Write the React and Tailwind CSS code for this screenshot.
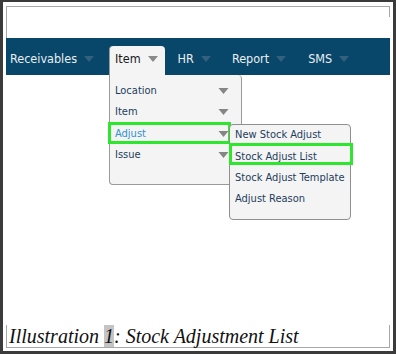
import React from "react"

const Caret = ({ className = "" }) => (
    <svg width="10" height="6" viewBox="0 0 10 6" className={className}>
        <path d="M0 0 L10 0 L5 6 Z" fill="currentColor" />
    </svg>
)

const NavItem = ({ label, className = "" }) => (
    <div className={`flex items-center gap-[7px] pt-[5px] h-[16px] leading-[16px] box-content ${className}`}>
        <span className="text-[#e9eff3]">{label}</span>
        <Caret className="text-[#33617c]" />
    </div>
)

const MenuRow = ({ label, active }) => (
    <div className="flex items-center justify-between h-[21.5px] pl-[5px] pr-[12px]">
        <span className={active ? "text-[#2c92d3]" : "text-[#1d3d5c]"}>{label}</span>
        <Caret className="text-[#858585] w-[11px]" />
    </div>
)

const subItems = ["New Stock Adjust", "Stock Adjust List", "Stock Adjust Template", "Adjust Reason"]

export default function App() {
    return (
        <div className="w-[396px] h-[354px] bg-white border-[#3b3b3b] border-l-[3px] border-r-[3px] border-t-2 border-b-[3px] flex flex-col font-['DejaVu_Sans_Condensed','DejaVu_Sans',sans-serif] [font-stretch:condensed]">
            {/* page corner marks */}
            <div className="h-[36px] px-[3px] pt-[4px] flex">
                <div className="flex-1 border-t border-l border-[#a8a8a8] flex justify-end">
                    <div className="h-[10px] border-r border-[#a8a8a8]" />
                </div>
            </div>

            {/* nav bar */}
            <div className="mx-[3px] h-[37px] bg-[#08466a] flex items-start pt-[8px] text-[12.5px]">
                <NavItem label="Receivables" className="ml-[4px]" />
                <div className="relative ml-[15px] h-[29px] bg-[#f4f4f4] rounded-t-[4px] border-l border-[#9a9a9a] pl-[5px] pr-[7px] pt-[5px]">
                    <div className="flex items-center gap-[7px] h-[16px] leading-[16px]">
                        <span className="text-[#1a1a1a]">Item</span>
                        <Caret className="text-[#8a8a8a]" />
                    </div>

                    {/* dropdown */}
                    <div className="absolute top-full left-[-1px] w-[133px] h-[110px] bg-[#f4f4f4] border-l border-r border-b border-[#9a9a9a] rounded-tr-[4px] rounded-b-[4px] pt-[5px] text-[11px]">
                        <MenuRow label="Location" />
                        <MenuRow label="Item" />
                        <MenuRow label="Adjust" active />
                        <MenuRow label="Issue" />

                        <div className="absolute left-[-2px] top-[47px] w-[123px] h-[22px] border-[3px] border-[#2ee62e]" />

                        {/* submenu */}
                        <div className="absolute left-[119px] top-[49px] w-[122px] h-[96px] bg-[#f4f4f4] border border-[#8f8f8f] rounded-[4px] flex flex-col">
                            {subItems.map(s => (
                                <div key={s} className="h-[21.3px] flex items-center pl-[5px] text-[#1d3d5c]">{s}</div>
                            ))}
                            <div className="absolute left-[-1px] top-[18px] w-[124px] h-[22px] border-[3px] border-[#2ee62e]" />
                        </div>
                    </div>
                </div>
                <NavItem label="HR" className="ml-[13px]" />
                <NavItem label="Report" className="ml-[21px]" />
                <NavItem label="SMS" className="ml-[22px]" />
            </div>

            <div className="flex-1" />

            {/* caption */}
            <div className="mx-[3px] mb-[3px] h-[23px] border-l border-r border-b border-[#a8a8a8] flex items-end pl-[2px] font-['Liberation_Serif',serif] italic text-[20px] leading-[22px] text-[#111]">
                <span>Illustration <span className="bg-[#c4c4c4]">1</span>: Stock Adjustment List</span>
            </div>
        </div>
    )
}
